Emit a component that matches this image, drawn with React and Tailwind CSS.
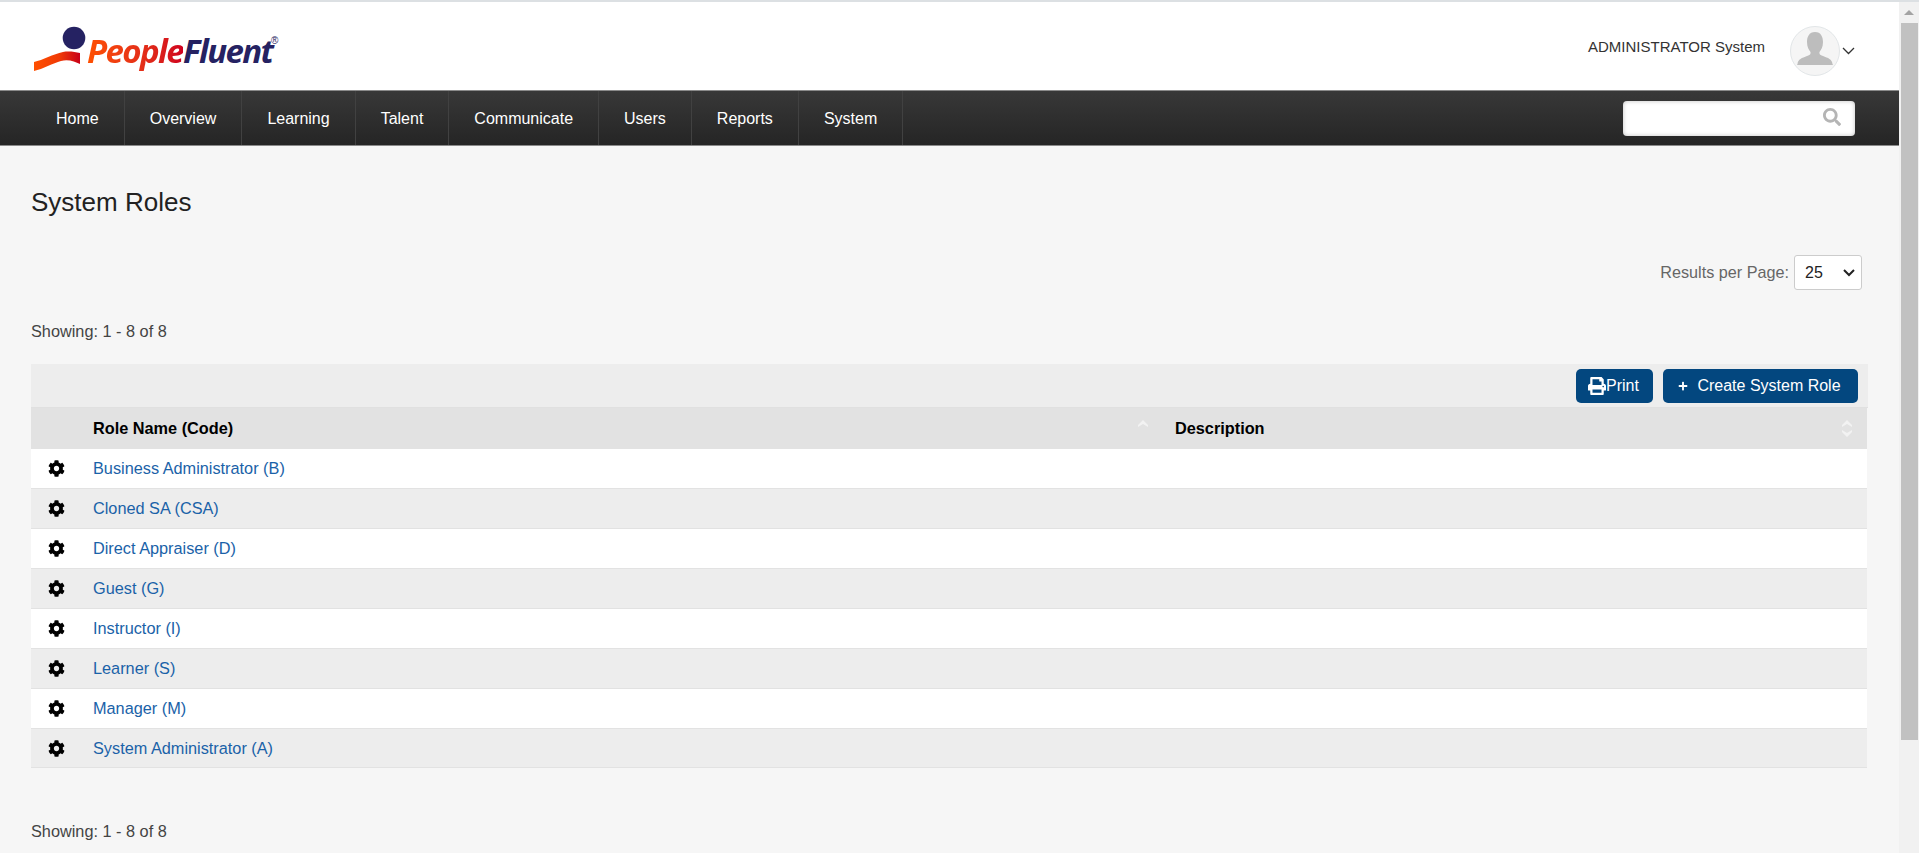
import { FaCog, FaPrint, FaSearch, FaPlus } from "react-icons/fa";

const navItems = ["Home", "Overview", "Learning", "Talent", "Communicate", "Users", "Reports", "System"];

const roles = [
  "Business Administrator (B)",
  "Cloned SA (CSA)",
  "Direct Appraiser (D)",
  "Guest (G)",
  "Instructor (I)",
  "Learner (S)",
  "Manager (M)",
  "System Administrator (A)",
];

const Logo = () => (
  <div className="relative h-[46px] w-[246px]">
    <svg className="absolute left-0 top-0" width="84" height="46" viewBox="0 0 84 46">
      <defs>
        <linearGradient id="swoosh" x1="0" x2="1" y1="0" y2="0">
          <stop offset="0" stopColor="#ff5000" />
          <stop offset="0.55" stopColor="#f03a06" />
          <stop offset="1" stopColor="#c80018" />
        </linearGradient>
      </defs>
      <circle cx="41" cy="12" r="11.3" fill="#252262" />
      <path d="M1 36 C10 34 20 28 30 26 C36 25 42 26 47 27 L47 38 C42 36 36 33 28 35 C20 37 10 43 1 45 Z" fill="url(#swoosh)" />
    </svg>
    <span className="absolute left-[54px] top-[6px] text-[33px] leading-[38px] font-bold italic tracking-[-1.6px] font-['Open_Sans',sans-serif]">
      <span className="bg-gradient-to-r from-[#ff5000] to-[#d0001e] bg-clip-text text-transparent">People</span>
      <span className="text-[#252262]">Fluent</span>
    </span>
    <span className="absolute left-[238px] top-[10px] text-[10px] leading-[10px] text-[#252262]">®</span>
  </div>
);

const SortIcon = ({ up, down }) => (
  <svg width="10" height="17" viewBox="0 0 10 17" fill="#f2f2f2">
    {up && <path d="M5 0 L10 5 L10 7 L5 4 L0 7 L0 5 Z" />}
    {down && <path d="M5 17 L10 12 L10 10 L5 13 L0 10 L0 12 Z" />}
  </svg>
);

export default function App() {
  return (
    <div className="flex h-[853px] w-[1919px] overflow-hidden bg-[#f6f6f6] font-['Liberation_Sans',Arial,sans-serif] text-[14px] text-[#444]">
      <div className="flex min-w-0 flex-1 flex-col">
        <div className="h-[2px] bg-[#dce0e3]" />
        <header className="flex h-[88px] items-center justify-between bg-white pl-[33px] pr-[44px]">
          <div className="pt-[6px]">
            <Logo />
          </div>
          <div className="flex items-center pt-[10px]">
            <span className="mr-[25px] -mt-[8px] text-[15px] text-[#333]">ADMINISTRATOR System</span>
            <div className="flex h-[50px] w-[50px] items-end justify-center overflow-hidden rounded-full border border-[#e2e6e8] bg-[#f5f5f5]">
              <svg width="36" height="36" viewBox="0 0 36 36" className="mb-[7px]">
                <path
                  d="M18 0 C24 0 26 5 26 10 C26 15 24 18 22.500 20 C22 22 23 23 26 24 C31 26 35 27 35.500 32 L36 33 L0 33 L.5 32 C1 27 5 26 10 24 C13 23 14 22 13.500 20 C12 18 10 15 10 10 C10 5 12 0 18 0 Z"
                  fill="#bdbdbd"
                />
              </svg>
            </div>
            <svg width="13" height="8" viewBox="0 0 13 8" className="mt-[-1px] ml-[2px]" fill="none" stroke="#333" strokeWidth="1.3">
              <path d="M1 1 L6.500 6.500 L12 1" />
            </svg>
          </div>
        </header>
        <nav className="flex h-[56px] items-stretch justify-between border-y border-y-[#8a8a8a] bg-gradient-to-b from-[#383838] to-[#252525] pr-[44px]">
          <ul className="flex items-stretch pl-[31px]">
            {navItems.map((item) => (
              <li key={item} className="flex items-center border-r border-r-[#414141] px-[25px] pt-[2px] text-[16px] text-white">
                {item}
              </li>
            ))}
          </ul>
          <div className="flex items-center">
            <div className="flex h-[35px] w-[232px] items-center justify-end rounded-[4px] bg-white pr-[14px] pb-[2px] shadow-[inset_0_0_4px_rgba(0,0,0,0.25)]">
              <FaSearch className="h-[18px] w-[18px] text-[#b5b5b5]" />
            </div>
          </div>
        </nav>
        <main className="flex-1 px-[31px]">
          <h1 className="pt-[40px] text-[26px] leading-[32px] text-[#222]">System Roles</h1>
          <div className="mt-[37px] flex items-center justify-end pr-[6px]">
            <span className="mr-[5px] text-[16.2px] text-[#666]">Results per Page:</span>
            <div className="flex h-[35px] w-[68px] items-center justify-between rounded-[3px] border border-[#ccc] bg-white pl-[10px] pr-[6px] text-[16px] text-[#222]">
              25
              <svg width="12" height="8" viewBox="0 0 12 8" fill="none" stroke="#222" strokeWidth="2">
                <path d="M1 1 L6 6 L11 1" />
              </svg>
            </div>
          </div>
          <p className="mt-[31px] text-[16.3px] leading-[20px] text-[#444]">Showing: 1 - 8 of 8</p>
          <div className="mt-[23px] w-[1837px]">
            <div className="flex h-[44px] items-center justify-end gap-[10px] border-b border-b-[#e0e0e0] bg-[#ededed] pr-[10px]">
              <button className="flex h-[34px] w-[77px] items-center justify-center rounded-[5px] bg-[#03477f] pr-[2px] text-[16px] text-white">
                <FaPrint className="h-[18px] w-[18px]" />
                Print
              </button>
              <button className="flex h-[34px] w-[195px] items-center justify-center gap-[9px] rounded-[5px] bg-[#03477f] pr-[2px] text-[16px] text-white">
                <FaPlus className="h-[10px] w-[10px]" />
                Create System Role
              </button>
            </div>
            <div className="flex h-[41px] w-[1836px] items-center bg-[#e2e2e2] text-[16.3px] font-bold text-black">
              <div className="w-[62px]" />
              <div className="flex w-[1082px] items-center justify-between pr-[27px]">
                Role Name (Code)
                <SortIcon up />
              </div>
              <div className="flex flex-1 items-center justify-between pr-[15px]">
                Description
                <SortIcon up down />
              </div>
            </div>
            {roles.map((role, i) => (
              <div
                key={role}
                className={`flex h-[40px] w-[1836px] items-center border-b border-b-[#e2e2e2] last:h-[39px] ${i % 2 === 0 ? "bg-white" : "bg-[#ededed]"}`}
              >
                <div className="flex w-[62px] justify-center pr-[11px]">
                  <FaCog className="h-[17px] w-[17px] text-black" />
                </div>
                <a className="text-[16.3px] text-[#1a62a8]">{role}</a>
              </div>
            ))}
          </div>
          <p className="mt-[53px] text-[16.3px] leading-[20px] text-[#444]">Showing: 1 - 8 of 8</p>
        </main>
      </div>
      <div className="flex w-[20px] flex-col border-t-2 border-t-[#dce0e3] bg-[#f1f1f1]">
        <div className="flex h-[21px] items-center justify-center">
          <div className="h-0 w-0 border-x-[5px] border-b-[5px] border-x-transparent border-b-[#a3a3a3]" />
        </div>
        <div className="ml-[2px] h-[717px] w-[17px] bg-[#c1c1c1]" />
      </div>
    </div>
  );
}
